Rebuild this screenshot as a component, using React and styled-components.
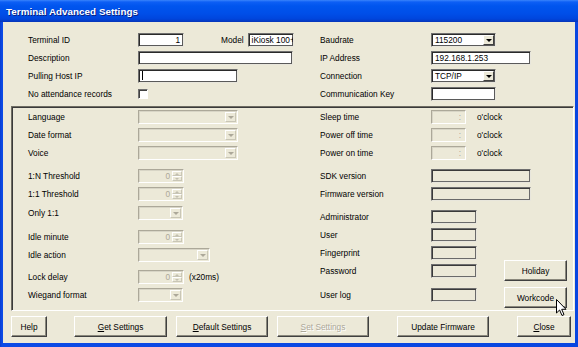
import React from 'react';
import styled, { createGlobalStyle } from 'styled-components';

const Global = createGlobalStyle`
  html, body { margin: 0; padding: 0; background: #fff; }
  body { font-family: "Liberation Sans", Arial, sans-serif; }
  #root { width: 578px; height: 347px; }
`;

const Window = styled.div`
  position: relative;
  width: 578px;
  height: 347px;
  box-sizing: border-box;
  display: flex;
  flex-direction: column;
  background: linear-gradient(90deg, #0a3dd0 0, #0b4ae6 2px, #0846e0 100%);
  overflow: hidden;
`;

const TitleBar = styled.div`
  height: 22px;
  flex: none;
  box-sizing: border-box;
  padding-left: 6px;
  display: flex;
  align-items: center;
  color: #fff;
  font-weight: bold;
  font-size: 9.8px;
  letter-spacing: 0.05px;
  text-shadow: 1px 1px #0a1f80;
  background: linear-gradient(180deg, #3a84fb 0, #0d5ff5 2px, #0055ee 6px, #004ee8 14px, #0045dc 19px, #0734b8 22px);
`;

const Body = styled.div`
  flex: 1;
  margin: 0 3px 4px 3px;
  background: #ece9d8;
  display: flex;
  flex-direction: column;
  font-size: 8.3px;
  color: #000;
`;

const TopGrid = styled.div`
  display: grid;
  grid-template-columns: 110px 182px 111px 1fr;
  grid-auto-rows: 14px;
  row-gap: 4px;
  padding: 11px 0 0 25px;
  align-items: center;
`;

const Label = styled.span`
  font-size: 8.3px;
  line-height: 14px;
  white-space: nowrap;
  color: ${p => (p.$disabled ? '#aca899' : '#000')};
  margin-left: ${p => p.$ml || 0}px;
`;

const Cell = styled.div`
  display: flex;
  align-items: center;
  height: 14px;
`;

const TextBox = styled.div`
  width: ${p => p.$w}px;
  height: 14px;
  flex: none;
  box-sizing: border-box;
  background: #fff;
  border: 1px solid;
  border-color: #6f6f6f #e8e6dc #e8e6dc #6f6f6f;
  box-shadow: inset 1px 1px #2a2a2a, inset -1px -1px #5a5a5a;
  padding: 0 3px;
  font-size: 8.3px;
  line-height: 12px;
  white-space: nowrap;
  overflow: hidden;
  text-align: ${p => p.$align || 'left'};
  margin-left: ${p => p.$ml || 0}px;
`;

const Caret = styled.span`
  display: inline-block;
  width: 1px;
  height: 9px;
  background: #000;
  vertical-align: -1px;
`;

const SelectBox = styled.div`
  width: ${p => p.$w}px;
  height: 14px;
  flex: none;
  box-sizing: border-box;
  display: flex;
  align-items: stretch;
  background: ${p => (p.$disabled ? '#ece9d8' : '#fff')};
  border: 1px solid;
  border-color: ${p => (p.$disabled ? '#aca899 #fff #fff #aca899' : '#6f6f6f #e8e6dc #e8e6dc #6f6f6f')};
  box-shadow: ${p => (p.$disabled ? 'inset 1px 1px #d8d5c6' : 'inset 1px 1px #2a2a2a, inset -1px -1px #5a5a5a')};
  padding: 1px;
`;

const SelectText = styled.div`
  flex: 1;
  font-size: 8.3px;
  line-height: 10px;
  padding-left: 2px;
  white-space: nowrap;
  overflow: hidden;
`;

const DropBtn = styled.div`
  width: 11px;
  flex: none;
  box-sizing: border-box;
  background: #ece9d8;
  border: 1px solid;
  border-color: ${p => (p.$disabled ? '#fff #c9c6b6 #c9c6b6 #fff' : '#fff #404040 #404040 #fff')};
  display: flex;
  align-items: center;
  justify-content: center;
  &::after {
    content: '';
    border-left: 3px solid transparent;
    border-right: 3px solid transparent;
    border-top: 3px solid ${p => (p.$disabled ? '#aca899' : '#000')};
    margin-top: 1px;
  }
`;

const CheckBox = styled.div`
  width: 10px;
  height: 10px;
  flex: none;
  box-sizing: border-box;
  background: #fff;
  border: 1px solid;
  border-color: #6f6f6f #fff #fff #6f6f6f;
  box-shadow: inset 1px 1px #404040;
`;

const Group = styled.div`
  margin: 5px 1px 0 8px;
  border: 1px solid;
  border-color: #6f6d63 #fff #fff #6f6d63;
  box-shadow: inset 1px 1px #3a3a3a;
  padding: 3px 0 2px 16px;
  display: grid;
  grid-template-columns: 292px 184px 63px;
`;

const Column = styled.div`
  display: flex;
  flex-direction: column;
`;

const Row = styled.div`
  display: flex;
  align-items: center;
  height: 14px;
  margin-top: ${p => p.$mt || 0}px;
`;

const RowLabel = styled.span`
  width: ${p => p.$w}px;
  flex: none;
  white-space: nowrap;
  font-size: 8.3px;
  line-height: 14px;
`;

const Suffix = styled.span`
  margin-left: ${p => p.$ml}px;
  font-size: 8.3px;
  white-space: nowrap;
`;

const DisabledField = styled.div`
  width: ${p => p.$w}px;
  height: 14px;
  flex: none;
  box-sizing: border-box;
  display: flex;
  align-items: stretch;
  background: #ece9d8;
  border: 1px solid;
  border-color: #aca899 #fff #fff #aca899;
  box-shadow: inset 1px 1px #d8d5c6;
  padding: 1px;
`;

const FieldValue = styled.div`
  flex: 1;
  color: #aca899;
  font-size: 8.3px;
  line-height: 10px;
  text-align: right;
  padding-right: ${p => p.$pr || 2}px;
`;

const SpinCol = styled.div`
  width: 10px;
  flex: none;
  display: flex;
  flex-direction: column;
`;

const SpinBtn = styled.div`
  flex: 1;
  box-sizing: border-box;
  border: 1px solid;
  border-color: #fff #c9c6b6 #c9c6b6 #fff;
  display: flex;
  align-items: center;
  justify-content: center;
  &::after {
    content: '';
    border-left: 2px solid transparent;
    border-right: 2px solid transparent;
    ${p => (p.$up ? 'border-bottom: 2px solid #c2bfb0;' : 'border-top: 2px solid #c2bfb0;')}
  }
`;

const InfoBox = styled.div`
  width: ${p => p.$w}px;
  height: 14px;
  flex: none;
  box-sizing: border-box;
  background: #ece9d8;
  border: 1px solid;
  border-color: #6f6f6f #e8e6dc #e8e6dc #6f6f6f;
  box-shadow: inset 1px 1px #3a3a3a, inset -1px -1px #6a6a6a;
`;

const SideButtons = styled.div`
  display: flex;
  flex-direction: column;
  gap: 6px;
  padding-top: 150px;
`;

const Button = styled.div`
  width: ${p => p.$w}px;
  height: ${p => p.$h || 21}px;
  margin-left: ${p => p.$ml || 0}px;
  box-sizing: border-box;
  background: #ece9d8;
  border: 1px solid;
  border-color: #fff #404040 #404040 #fff;
  box-shadow: inset -1px -1px #8a887c;
  display: flex;
  align-items: center;
  justify-content: center;
  font-size: 8.3px;
  white-space: nowrap;
  color: ${p => (p.$disabled ? '#aca899' : '#000')};
  text-shadow: ${p => (p.$disabled ? '1px 1px #fff' : 'none')};
  flex: none;
  u { text-decoration: underline; }
`;

const ButtonBar = styled.div`
  display: flex;
  align-items: center;
  padding: 5px 0 0 8px;
`;

const Cursor = styled.svg`
  position: absolute;
  left: 556px;
  top: 299px;
`;

const SelectField = ({ w, value, disabled }) => (
  <SelectBox $w={w} $disabled={disabled}>
    <SelectText>{value}</SelectText>
    <DropBtn $disabled={disabled} />
  </SelectBox>
);

const Spin = ({ w = 46 }) => (
  <DisabledField $w={w}>
    <FieldValue>0</FieldValue>
    <SpinCol>
      <SpinBtn $up />
      <SpinBtn />
    </SpinCol>
  </DisabledField>
);

const TimeBox = () => (
  <DisabledField $w={35}>
    <FieldValue $pr={3}>:</FieldValue>
  </DisabledField>
);

const leftRows = [
  { label: 'Language', mt: 0, ctrl: <SelectField w={100} disabled /> },
  { label: 'Date format', mt: 4, ctrl: <SelectField w={100} disabled /> },
  { label: 'Voice', mt: 4, ctrl: <SelectField w={100} disabled /> },
  { label: '1:N Threshold', mt: 9, ctrl: <Spin /> },
  { label: '1:1 Threshold', mt: 4, ctrl: <Spin /> },
  { label: 'Only 1:1', mt: 5, ctrl: <SelectField w={45} disabled /> },
  { label: 'Idle minute', mt: 10, ctrl: <Spin /> },
  { label: 'Idle action', mt: 4, ctrl: <SelectField w={72} disabled /> },
  { label: 'Lock delay', mt: 8, ctrl: <Spin />, suffix: '(x20ms)' },
  { label: 'Wiegand format', mt: 4, ctrl: <SelectField w={45} disabled /> },
];

const rightRows = [
  { label: 'Sleep time', mt: 0, ctrl: <TimeBox />, suffix: "o'clock" },
  { label: 'Power off time', mt: 4, ctrl: <TimeBox />, suffix: "o'clock" },
  { label: 'Power on time', mt: 4, ctrl: <TimeBox />, suffix: "o'clock" },
  { label: 'SDK version', mt: 9, ctrl: <InfoBox $w={100} /> },
  { label: 'Firmware version', mt: 4, ctrl: <InfoBox $w={100} /> },
  { label: 'Administrator', mt: 9, ctrl: <InfoBox $w={46} /> },
  { label: 'User', mt: 4, ctrl: <InfoBox $w={46} /> },
  { label: 'Fingerprint', mt: 4, ctrl: <InfoBox $w={46} /> },
  { label: 'Password', mt: 4, ctrl: <InfoBox $w={46} /> },
  { label: 'User log', mt: 10, ctrl: <InfoBox $w={46} /> },
];

export default function App() {
  return (
    <>
      <Global />
      <Window>
        <TitleBar>Terminal Advanced Settings</TitleBar>
        <Body>
          <TopGrid>
            <Label>Terminal ID</Label>
            <Cell>
              <TextBox $w={46} $align="right">1</TextBox>
              <Label $ml={37}>Model</Label>
              <TextBox $w={46} $ml={4}>iKiosk 100+</TextBox>
            </Cell>
            <Label>Baudrate</Label>
            <Cell><SelectField w={65} value="115200" /></Cell>

            <Label>Description</Label>
            <Cell><TextBox $w={155} /></Cell>
            <Label>IP Address</Label>
            <Cell><TextBox $w={100}>192.168.1.253</TextBox></Cell>

            <Label>Pulling Host IP</Label>
            <Cell><TextBox $w={100}><Caret /></TextBox></Cell>
            <Label>Connection</Label>
            <Cell><SelectField w={65} value="TCP/IP" /></Cell>

            <Label>No attendance records</Label>
            <Cell><CheckBox /></Cell>
            <Label>Communication Key</Label>
            <Cell><TextBox $w={65} /></Cell>
          </TopGrid>

          <Group>
            <Column>
              {leftRows.map(r => (
                <Row key={r.label} $mt={r.mt}>
                  <RowLabel $w={110}>{r.label}</RowLabel>
                  {r.ctrl}
                  {r.suffix && <Suffix $ml={5}>{r.suffix}</Suffix>}
                </Row>
              ))}
            </Column>
            <Column>
              {rightRows.map(r => (
                <Row key={r.label} $mt={r.mt}>
                  <RowLabel $w={111}>{r.label}</RowLabel>
                  {r.ctrl}
                  {r.suffix && <Suffix $ml={11}>{r.suffix}</Suffix>}
                </Row>
              ))}
            </Column>
            <SideButtons>
              <Button $w={63}>Holiday</Button>
              <Button $w={63}>Workcode</Button>
            </SideButtons>
          </Group>

          <ButtonBar>
            <Button $w={36}>Help</Button>
            <Button $w={93} $ml={27}><span><u>G</u>et Settings</span></Button>
            <Button $w={92} $ml={9}><span><u>D</u>efault Settings</span></Button>
            <Button $w={92} $ml={9} $disabled><span><u>S</u>et Settings</span></Button>
            <Button $w={92} $ml={28}>Update Firmware</Button>
            <Button $w={54} $ml={28}><span><u>C</u>lose</span></Button>
          </ButtonBar>
        </Body>
        <Cursor width="11" height="18" viewBox="0 0 11 18">
          <path d="M0.5 0.5 L0.5 14 L3.6 11 L6 16.5 L8 15.6 L5.7 10.3 L10 10.3 Z" fill="#fff" stroke="#000" strokeWidth="1" strokeLinejoin="miter" />
        </Cursor>
      </Window>
    </>
  );
}
